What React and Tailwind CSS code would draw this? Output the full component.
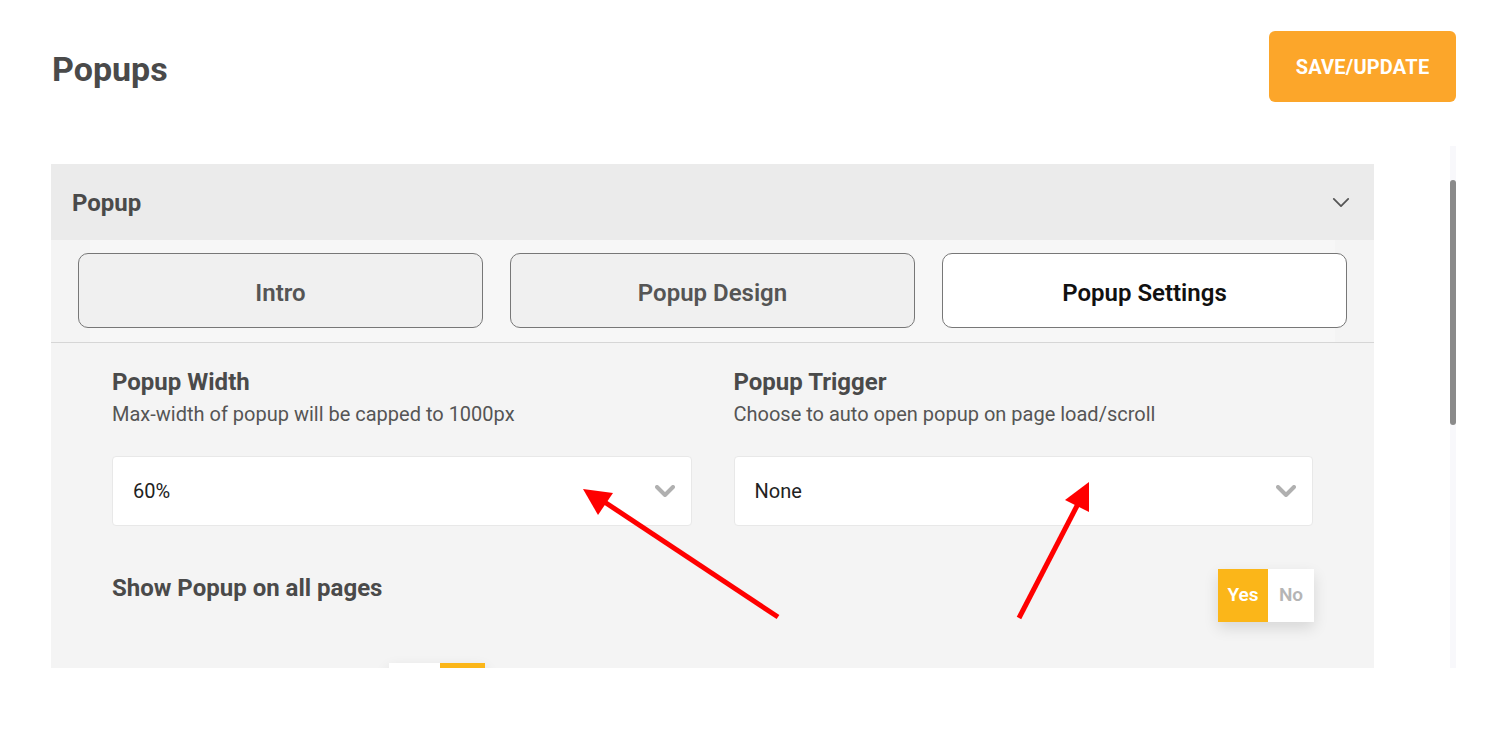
import React from 'react';

const font = { fontFamily: 'Roboto, "Liberation Sans", sans-serif' };

const Chevron = ({ className }) => (
    <svg viewBox="0 0 20 12" className={className} fill="none" stroke="currentColor" strokeLinecap="round" strokeLinejoin="round">
        <path d="M2 2l8 8 8-8" />
    </svg>
);

const Select = ({ value }) => (
    <div className="h-[70px] bg-white border border-[#e8e8e8] rounded-[4px] flex items-center justify-between pl-[20px] pr-[16px]">
        <span className="text-[20px] text-[#222]">{value}</span>
        <Chevron className="w-[20px] h-[12px] text-[#b0b0b0] [stroke-width:4]" />
    </div>
);

const Field = ({ label, hint, value }) => (
    <div>
        <div className="text-[24px] font-bold text-[#4a4a4a] leading-[30px]">{label}</div>
        <div className="text-[20px] text-[#555] leading-[24px] mt-[5px]">{hint}</div>
        <div className="mt-[30px]">
            <Select value={value} />
        </div>
    </div>
);

const Tab = ({ label, active }) => (
    <button
        className={
            active
                ? 'h-[75px] rounded-[10px] border border-[#777] bg-white text-[24px] font-semibold text-[#111] pt-[4px]'
                : 'h-[75px] rounded-[10px] border border-[#777] bg-[#f0f0f0] text-[24px] font-semibold text-[#555] pt-[4px]'
        }
    >
        {label}
    </button>
);

export default function App() {
    return (
        <div className="relative w-full min-h-[742px] bg-white" style={font}>
            {/* page header */}
            <div className="flex items-center justify-between pl-[52px] pr-[54px] pt-[31px]">
                <h1 className="text-[34px] font-bold text-[#4a4a4a] leading-none pt-[4px]">Popups</h1>
                <button className="w-[187px] h-[71px] rounded-[6px] bg-[#fca62a] text-white text-[20px] font-bold tracking-[0.01em]">
                    SAVE/UPDATE
                </button>
            </div>

            {/* scroll area */}
            <div className="flex ml-[51px] mr-[54px] mt-[44px] h-[522px]">
                <div className="w-[1323px] overflow-hidden pt-[18px]">
                    <div className="h-[76px] bg-[#ebebeb] flex items-center justify-between pl-[21px] pr-[24px]">
                        <span className="text-[24px] font-bold text-[#4a4a4a] pt-[2px]">Popup</span>
                        <Chevron className="w-[18px] h-[11px] text-[#555] [stroke-width:2]" />
                    </div>

                    <div className="bg-[#f4f4f4] px-[39px] border-b border-[#d6d6d6]">
                        <div className="bg-[#f7f7f7] pt-[13px] pb-[14px]">
                            <div className="grid grid-cols-3 gap-[27px] -mx-[12px]">
                                <Tab label="Intro" />
                                <Tab label="Popup Design" />
                                <Tab label="Popup Settings" active />
                            </div>
                        </div>
                    </div>

                    <div className="bg-[#f4f4f4] px-[61px] pt-[24px] pb-[40px]">
                        <div className="grid grid-cols-2 gap-[42px]">
                            <Field label="Popup Width" hint="Max-width of popup will be capped to 1000px" value="60%" />
                            <Field label="Popup Trigger" hint="Choose to auto open popup on page load/scroll" value="None" />
                        </div>

                        <div className="flex items-start justify-between mt-[43px] -mr-[1px]">
                            <span className="text-[24px] font-bold text-[#4a4a4a] leading-[30px] mt-[4px]">Show Popup on all pages</span>
                            <div className="flex h-[53px] shadow-[0_6px_14px_rgba(0,0,0,0.12)]">
                                <span className="w-[50px] bg-[#fbb619] text-white text-[19px] font-semibold flex items-center justify-center">Yes</span>
                                <span className="w-[46px] bg-white text-[#b5b5b5] text-[19px] font-semibold flex items-center justify-center">No</span>
                            </div>
                        </div>

                        <div className="flex mt-[41px] pl-[277px]">
                            <div className="flex h-[53px] shadow-[0_6px_14px_rgba(0,0,0,0.12)]">
                                <span className="w-[51px] bg-white" />
                                <span className="w-[45px] bg-[#fbb619]" />
                            </div>
                        </div>
                    </div>
                </div>

                <div className="flex-1" />

                {/* scrollbar */}
                <div className="w-[6px] h-[522px] bg-[#f8f8fb] pt-[34px]">
                    <div className="h-[245px] bg-[#8a8a8a] rounded-[3px]" />
                </div>
            </div>

            {/* red annotation arrows */}
            <svg className="absolute left-0 top-0 pointer-events-none" width="1510" height="742">
                <line x1="778" y1="617" x2="600" y2="499" stroke="#ff0000" strokeWidth="5" />
                <polygon points="583,489 613,493 598,515" fill="#ff0000" />
                <line x1="1019" y1="618" x2="1080" y2="500" stroke="#ff0000" strokeWidth="5" />
                <polygon points="1089,482 1065,500 1089,512" fill="#ff0000" />
            </svg>
        </div>
    );
}
